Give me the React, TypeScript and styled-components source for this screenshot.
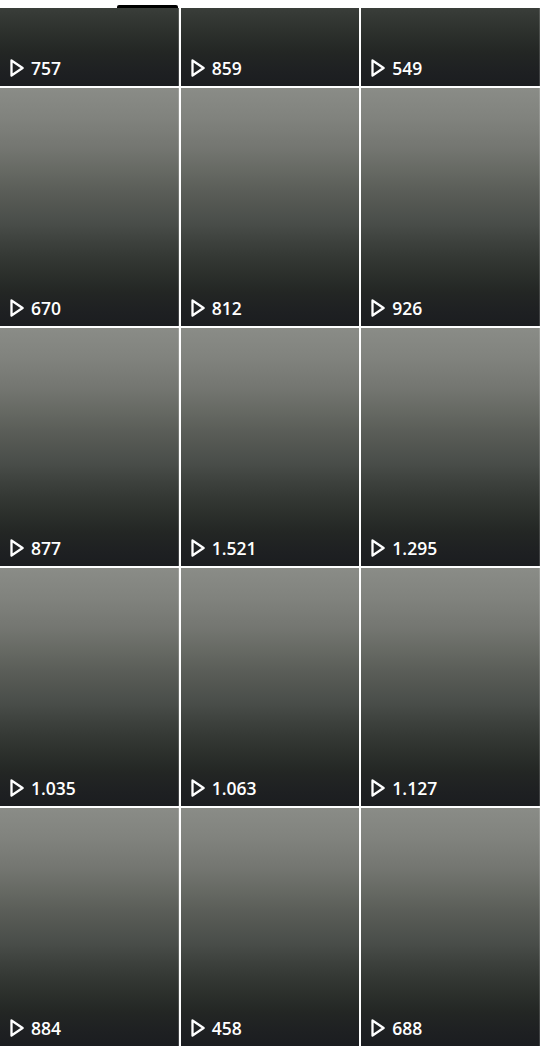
import React from "react";
import styled, { createGlobalStyle } from "styled-components";

const Global = createGlobalStyle`
  html, body { margin: 0; padding: 0; background: #ffffff; }
  body { font-family: "Open Sans", "Liberation Sans", sans-serif; overflow: hidden; }
`;

const Page = styled.div`
  width: 540px;
  height: 1046px;
  overflow: hidden;
  background: #ffffff;
  display: flex;
  flex-direction: column;
`;

const TabStrip = styled.div`
  height: 8px;
  flex: none;
  position: relative;
  background: #ffffff;
`;

const Indicator = styled.div`
  position: absolute;
  left: 117px;
  bottom: 0;
  width: 61px;
  height: 3px;
  border-radius: 2px 2px 0 0;
  background: #000000;
`;

const Grid = styled.div`
  display: grid;
  grid-template-columns: repeat(3, 1fr);
  column-gap: 2px;
  row-gap: 2px;
  background: #ffffff;
`;

const Tile = styled.div<{ $cropped?: boolean }>`
  position: relative;
  height: ${(p) => (p.$cropped ? "78px" : "238px")};
  background-image: linear-gradient(
    180deg,
    #8a8c87 0%,
    #81837e 12%,
    #747671 25%,
    #666963 35%,
    #585b56 45%,
    #494d49 57%,
    #3b3f3b 66%,
    #2e322e 76%,
    #232624 86%,
    #1e2022 94%,
    #1b1d20 100%
  );
  background-size: 100% 238px;
  background-position: bottom;
  background-repeat: no-repeat;
  display: flex;
  align-items: flex-end;
`;

const Views = styled.div`
  display: flex;
  align-items: center;
  gap: 7px;
  padding: 0 0 9px 10px;
  color: #ffffff;
  font-size: 17.5px;
  font-weight: 600;
  line-height: 18px;
`;

const PlayIcon = () => (
  <svg width="14" height="18" viewBox="0 0 14 18" fill="none">
    <path
      d="M1.5 1.5 L12.6 9 L1.5 16.5 Z"
      stroke="#ffffff"
      strokeWidth="2.3"
      strokeLinejoin="round"
    />
  </svg>
);

const counts = [
  "757", "859", "549",
  "670", "812", "926",
  "877", "1.521", "1.295",
  "1.035", "1.063", "1.127",
  "884", "458", "688",
];

export default function App() {
  return (
    <Page>
      <Global />
      <TabStrip>
        <Indicator />
      </TabStrip>
      <Grid>
        {counts.map((c, i) => (
          <Tile key={i} $cropped={i < 3}>
            <Views>
              <PlayIcon />
              <span>{c}</span>
            </Views>
          </Tile>
        ))}
      </Grid>
    </Page>
  );
}
